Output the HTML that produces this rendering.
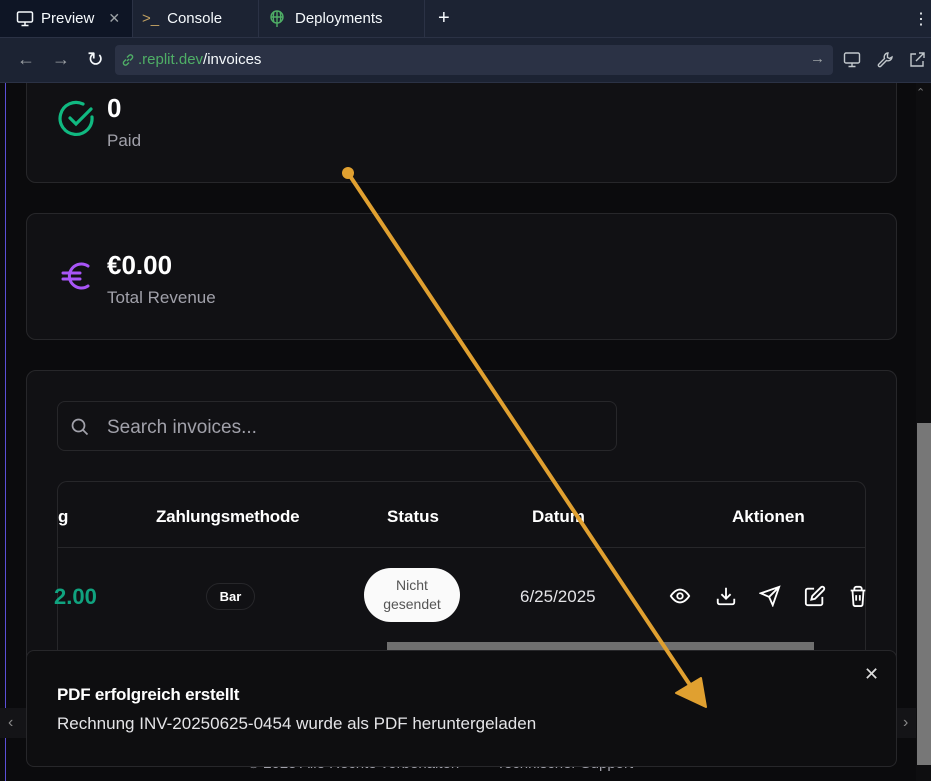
<!DOCTYPE html>
<html><head><meta charset="utf-8"><style>
*{box-sizing:border-box;margin:0;padding:0}
body{width:931px;height:781px;overflow:hidden;background:#0b0b0d;font-family:"Liberation Sans",sans-serif;position:relative;color:#fff}
.abs{position:absolute}
.tabbar{left:0;top:0;width:931px;height:37px;background:#1c2333}
.tab{top:0;height:37px;font-size:15px;color:#f5f9fc;display:flex;align-items:center}
.nav{left:0;top:37px;width:931px;height:46px;background:#1c2333;border-top:1px solid #2b3245;border-bottom:1px solid #2b3245}
.url{left:115px;top:45px;width:718px;height:30px;background:#2b3245;border-radius:4px;font-size:15px;line-height:30px;padding-left:23px;color:#f5f9fc}
.card{background:#111114;border:1px solid #27272a;border-radius:10px}
.muted{color:#a1a1aa}
#view{position:absolute;left:0;top:83px;width:931px;height:698px;overflow:hidden}
#inner{position:absolute;left:0;top:-83px;width:931px;height:781px}
</style></head><body>
<div class="abs tabbar"></div>
<div class="abs" style="left:0;top:0;width:132px;height:37px;background:#0e1525"></div>
<div class="abs tab" style="left:16px"><svg width="18" height="18" viewBox="0 0 18 18" fill="none" stroke="#f5f9fc" stroke-width="1.5"><rect x="1.5" y="2" width="15" height="10" rx="1.5"/><path d="M9 12v3M5.5 15.5h7"/></svg><span style="margin-left:7px">Preview</span><span style="margin-left:14px;color:#9da2a6;font-size:14px">✕</span></div>
<div class="abs" style="left:132px;top:0;width:1px;height:37px;background:#2b3245"></div>
<div class="abs tab" style="left:142px"><span style="color:#c0a062;font-size:15px">&gt;_</span><span style="margin-left:8px">Console</span></div>
<div class="abs" style="left:258px;top:0;width:1px;height:37px;background:#2b3245"></div>
<div class="abs tab" style="left:268px"><svg width="18" height="18" viewBox="0 0 18 18" fill="none" stroke="#4fae66" stroke-width="1.4"><circle cx="9" cy="7" r="6"/><path d="M3 7h12M9 1v16M6 1.5c-1 3-1 8 0 11M12 1.5c1 3 1 8 0 11"/></svg><span style="margin-left:9px">Deployments</span></div>
<div class="abs" style="left:424px;top:0;width:1px;height:37px;background:#2b3245"></div>
<div class="abs tab" style="left:438px;font-size:20px">+</div>
<div class="abs tab" style="left:913px;font-size:16px">⋮</div>
<div class="abs nav"></div>
<div class="abs" style="left:17px;top:49px;font-size:18px;color:#9da2a6">←</div>
<div class="abs" style="left:52px;top:49px;font-size:18px;color:#9da2a6">→</div>
<div class="abs" style="left:87px;top:47px;font-size:20px;color:#f5f9fc">↻</div>
<div class="abs url"><span style="color:#4fae66">.replit.dev</span>/invoices</div>
<svg class="abs" style="left:121px;top:53px" width="14" height="14" viewBox="0 0 14 14" fill="none" stroke="#4fae66" stroke-width="1.4"><path d="M6 8l2-2M5 6.5L3 8.5a2.1 2.1 0 0 0 3 3L8 9.5M9 7.5l2-2a2.1 2.1 0 0 0-3-3L6 4.5"/></svg>
<div class="abs" style="left:810px;top:50px;font-size:15px;color:#9da2a6">→</div>
<svg class="abs" style="left:843px;top:51px" width="18" height="18" viewBox="0 0 18 18" fill="none" stroke="#c2c8cc" stroke-width="1.4"><rect x="1.5" y="2" width="15" height="10" rx="1.5"/><path d="M9 12v3M5.5 15.5h7"/></svg>
<svg class="abs" style="left:876px;top:51px" width="18" height="18" viewBox="0 0 18 18" fill="none" stroke="#c2c8cc" stroke-width="1.4"><path d="M12 2a4 4 0 0 0-3.5 5.5L2.5 13.5a1.5 1.5 0 0 0 2 2l6-6A4 4 0 0 0 16 6l-2.5 1.5-2-1 0-2.5z"/></svg>
<svg class="abs" style="left:908px;top:51px" width="18" height="18" viewBox="0 0 18 18" fill="none" stroke="#c2c8cc" stroke-width="1.4"><path d="M8 3H3v12h12v-5M11 2h5v5M16 2l-8 8"/></svg>

<div id="view"><div id="inner">
<div class="abs" style="left:5px;top:83px;width:1px;height:698px;background:#5b4fd6"></div>
<div class="abs" style="left:916px;top:83px;width:15px;height:698px;background:#0e0e10"></div>
<div class="abs" style="left:917px;top:423px;width:14px;height:342px;background:#777"></div>
<div class="abs" style="left:916px;top:86px;font-size:11px;color:#777">⌃</div>

<div class="abs card" style="left:26px;top:60px;width:871px;height:123px"></div>
<svg class="abs" style="left:57px;top:100px" width="40" height="40" viewBox="0 0 40 40" fill="none" stroke="#10b981" stroke-width="3.2" stroke-linecap="round"><path d="M35 17a16 16 0 1 1-9-13"/><path d="M13 18l6 6 15-15"/></svg>
<div class="abs" style="left:107px;top:93px;font-size:26px;font-weight:bold">0</div>
<div class="abs muted" style="left:107px;top:131px;font-size:17px">Paid</div>

<div class="abs card" style="left:26px;top:213px;width:871px;height:127px"></div>
<svg class="abs" style="left:60px;top:260px" width="32" height="32" viewBox="0 0 32 32" fill="none" stroke="#a855f7" stroke-width="3" stroke-linecap="round"><path d="M28 6a12 12 0 1 0 0 20"/><path d="M3 13h17M3 19h17"/></svg>
<div class="abs" style="left:107px;top:250px;font-size:26px;font-weight:bold">€0.00</div>
<div class="abs muted" style="left:107px;top:288px;font-size:17px">Total Revenue</div>

<div class="abs card" style="left:26px;top:370px;width:871px;height:320px"></div>
<div class="abs" style="left:57px;top:401px;width:560px;height:50px;border:1px solid #27272a;border-radius:8px"></div>
<svg class="abs" style="left:70px;top:417px" width="20" height="20" viewBox="0 0 20 20" fill="none" stroke="#a1a1aa" stroke-width="1.7"><circle cx="8.5" cy="8.5" r="6"/><path d="M13 13l4.5 4.5"/></svg>
<div class="abs muted" style="left:107px;top:417px;font-size:19px">Search invoices...</div>

<div class="abs" style="left:57px;top:481px;width:809px;height:200px;border:1px solid #27272a;border-radius:10px 10px 0 0;border-bottom:none"></div>
<div class="abs" style="left:57px;top:547px;width:809px;height:1px;background:#27272a"></div>
<div class="abs" style="left:58px;top:507px;font-size:17px;font-weight:bold">g</div>
<div class="abs" style="left:156px;top:507px;font-size:17px;font-weight:bold;letter-spacing:-0.2px">Zahlungsmethode</div>
<div class="abs" style="left:387px;top:507px;font-size:17px;font-weight:bold">Status</div>
<div class="abs" style="left:532px;top:507px;font-size:17px;font-weight:bold">Datum</div>
<div class="abs" style="left:732px;top:507px;font-size:17px;font-weight:bold">Aktionen</div>
<div class="abs" style="left:54px;top:584px;font-size:22px;font-weight:bold;color:#10a37f">2.00</div>
<div class="abs" style="left:206px;top:583px;width:49px;height:27px;border:1px solid #27272a;border-radius:14px;font-size:13px;font-weight:bold;text-align:center;line-height:25px">Bar</div>
<div class="abs" style="left:364px;top:568px;width:96px;height:54px;background:#fafafa;border-radius:27px;color:#555;font-size:14px;text-align:center;line-height:19px;padding-top:8px">Nicht<br>gesendet</div>
<div class="abs" style="left:520px;top:587px;font-size:17px;color:#e4e4e7">6/25/2025</div>
<svg class="abs" style="left:669px;top:585px" width="22" height="22" viewBox="0 0 24 24" fill="none" stroke="#fff" stroke-width="2"><path d="M2 12s4-7 10-7 10 7 10 7-4 7-10 7S2 12 2 12z"/><circle cx="12" cy="12" r="3"/></svg>
<svg class="abs" style="left:715px;top:585px" width="22" height="22" viewBox="0 0 24 24" fill="none" stroke="#fff" stroke-width="2"><path d="M21 15v4a2 2 0 0 1-2 2H5a2 2 0 0 1-2-2v-4M7 10l5 5 5-5M12 15V3"/></svg>
<svg class="abs" style="left:759px;top:585px" width="22" height="22" viewBox="0 0 24 24" fill="none" stroke="#fff" stroke-width="2"><path d="M22 2L11 13M22 2l-7 20-4-9-9-4 20-7z"/></svg>
<svg class="abs" style="left:804px;top:585px" width="22" height="22" viewBox="0 0 24 24" fill="none" stroke="#fff" stroke-width="2"><path d="M11 4H4a2 2 0 0 0-2 2v14a2 2 0 0 0 2 2h14a2 2 0 0 0 2-2v-7"/><path d="M18.5 2.5a2.1 2.1 0 0 1 3 3L12 15l-4 1 1-4z"/></svg>
<svg class="abs" style="left:850px;top:585px" width="16" height="22" viewBox="0 0 16 24" fill="none" stroke="#fff" stroke-width="2"><path d="M0 6h16M4 6V4a2 2 0 0 1 2-2h4a2 2 0 0 1 2 2v2M2 6l1 15a2 2 0 0 0 2 2h6a2 2 0 0 0 2-2l1-15M6 11v6M10 11v6"/></svg>
<div class="abs" style="left:387px;top:642px;width:427px;height:12px;background:#6f6f6f"></div>

<div class="abs" style="left:0;top:708px;width:26px;height:30px;background:#141417;color:#888;font-size:16px;line-height:30px;padding-left:8px">‹</div>
<div class="abs" style="left:897px;top:708px;width:19px;height:30px;background:#141417;color:#888;font-size:16px;line-height:30px;padding-left:6px">›</div>
<div class="abs muted" style="left:248px;top:755px;font-size:15px">© 2025 Alle Rechte vorbehalten &nbsp; &nbsp; &nbsp; &nbsp; Technischer Support</div>

<div class="abs" style="left:26px;top:650px;width:871px;height:117px;background:#0e0e10;border:1px solid #27272a;border-radius:8px"></div>
<div class="abs" style="left:864px;top:664px;font-size:18px;color:#ddd">✕</div>
<div class="abs" style="left:57px;top:685px;font-size:17px;font-weight:bold;letter-spacing:-0.2px">PDF erfolgreich erstellt</div>
<div class="abs" style="left:57px;top:714px;font-size:17px;color:#e4e4e7">Rechnung INV-20250625-0454 wurde als PDF heruntergeladen</div>

<svg class="abs" style="left:0;top:0" width="931" height="781" viewBox="0 0 931 781"><line x1="348" y1="173" x2="698" y2="697" stroke="#e0a030" stroke-width="4" stroke-linecap="round"/><circle cx="348" cy="173" r="6" fill="#e0a030"/><path d="M676 693L706 707 701 678z" fill="#e0a030" stroke="#e0a030" stroke-width="2" stroke-linejoin="round"/></svg>
</div></div>
</body></html>
